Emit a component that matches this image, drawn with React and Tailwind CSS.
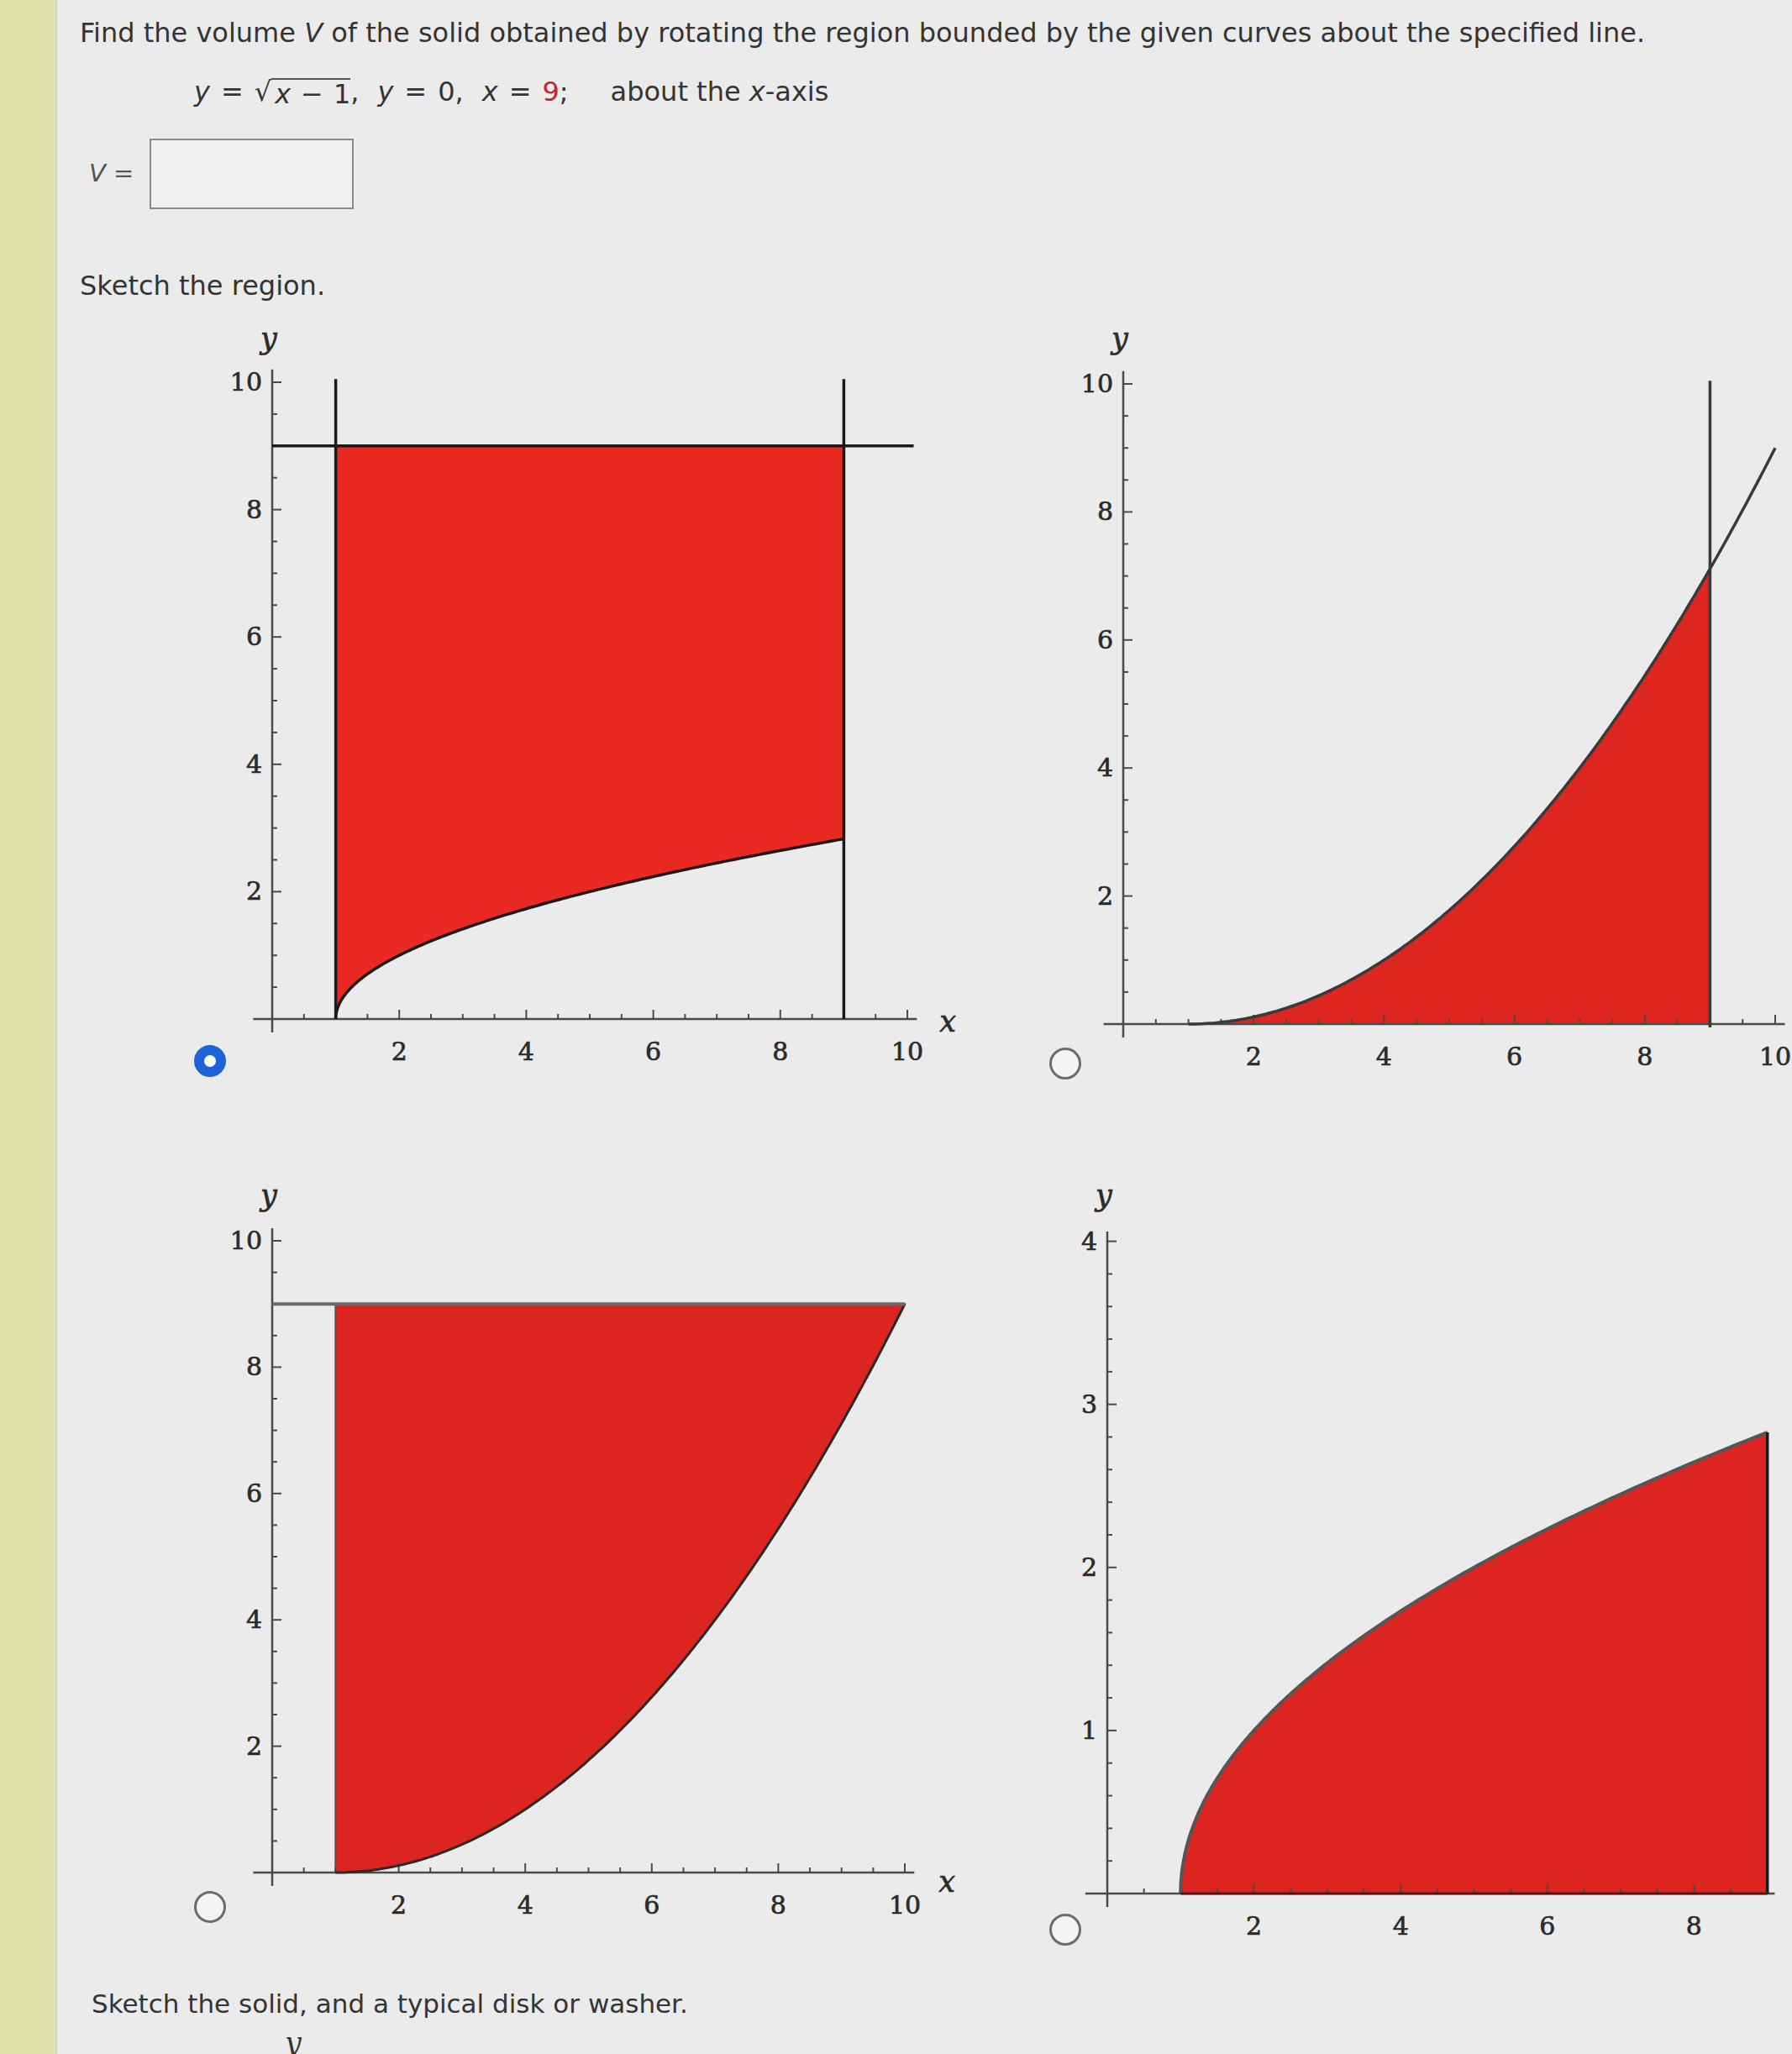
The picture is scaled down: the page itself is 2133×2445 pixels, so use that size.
import React from 'react'

const SANS = '"DejaVu Sans", Verdana, sans-serif'
const SERIF = '"DejaVu Serif", "Liberation Serif", serif'

// sample a curve; sq packs points near a (for the sqrt corner)
const pts = (f, a, b, n = 160, sq = false) =>
  Array.from({ length: n + 1 }, (_, i) => {
    const t = i / n
    const x = a + (b - a) * (sq ? t * t : t)
    return [x, f(x)]
  })

const sqrtF = x => Math.sqrt(Math.max(0, x - 1))
const quadF = x => ((x - 1) * (x - 1)) / 9

function Plot({ w, h, ox, oy, sx, sy, xEnd, yEnd, xStep = 0.5, yStep = 0.5, xLabels, yLabels, xName, under, over }) {
  const X = x => ox + x * sx
  const Y = y => oy - y * sy
  const line = arr => arr.map(([x, y], i) => `${i ? 'L' : 'M'}${X(x).toFixed(1)},${Y(y).toFixed(1)}`).join(' ')

  const xt = []
  for (let v = xStep; v <= xEnd - 0.05; v += xStep) xt.push(+v.toFixed(2))
  const yt = []
  for (let v = yStep; v <= yEnd + 0.001; v += yStep) yt.push(+v.toFixed(2))

  return (
    <svg width={w} height={h} className="block shrink-0" style={{ fontFamily: SERIF }}>
      {under && under({ X, Y, line })}

      {/* axes */}
      <line x1={X(-0.3)} y1={Y(0)} x2={X(xEnd)} y2={Y(0)} stroke="#4a4a4a" strokeWidth="2.5" />
      <line x1={X(0)} y1={Y(0) + 16} x2={X(0)} y2={Y(yEnd)} stroke="#4a4a4a" strokeWidth="2.5" />
      {xt.map(v => {
        const major = xLabels.includes(v)
        return <line key={'x' + v} x1={X(v)} y1={Y(0)} x2={X(v)} y2={Y(0) - (major ? 11 : 6)} stroke="#4a4a4a" strokeWidth="2" />
      })}
      {yt.map(v => {
        const major = yLabels.includes(v)
        return <line key={'y' + v} x1={X(0)} y1={Y(v)} x2={X(0) + (major ? 11 : 6)} y2={Y(v)} stroke="#4a4a4a" strokeWidth="2" />
      })}

      {over && over({ X, Y, line })}

      {/* labels */}
      <g fill="#2b2b2b" stroke="#2b2b2b" strokeWidth="0.7">
        {xLabels.map(v => (
          <text key={'xl' + v} x={X(v)} y={Y(0) + 49} textAnchor="middle" fontSize="30">{v}</text>
        ))}
        {yLabels.map(v => (
          <text key={'yl' + v} x={X(0) - 12} y={Y(v) + 10} textAnchor="end" fontSize="30">{v}</text>
        ))}
        <text x={X(0) - 4} y={40} textAnchor="middle" fontSize="35" fontStyle="italic">y</text>
        {xName && (
          <text x={xName[0]} y={xName[1]} textAnchor="middle" fontSize="35" fontStyle="italic">x</text>
        )}
      </g>
    </svg>
  )
}

function Radio({ checked, mb }) {
  return (
    <div
      className={`w-[38px] h-[38px] shrink-0 self-end rounded-full ${
        checked ? 'border-[12px] border-[#1f63d8] bg-white' : 'border-[3px] border-[#6c6c6c] bg-[#f4f4f4]'
      } ${mb}`}
    />
  )
}

export default function App() {
  return (
    <div className="flex w-[2133px] h-[2445px] overflow-hidden bg-[#ebebeb]" style={{ fontFamily: SANS }}>
      {/* left gutter */}
      <div className="w-[68px] shrink-0 bg-[#dfe2ab] border-r-2 border-[#d2d4c0]" />

      <div className="flex-1 min-w-0 pl-[27px] pt-[19px] text-[#343434]">
        <p className="text-[32px] leading-[40px] whitespace-nowrap">
          Find the volume <i>V</i> of the solid obtained by rotating the region bounded by the given curves about the specified line.
        </p>

        {/* curves */}
        <div className="mt-[30px] ml-[136px] flex items-end text-[32px] leading-[40px] whitespace-nowrap">
          <i>y</i>
          <span className="mx-[13px]">=</span>
          <span>√</span>
          <span className="border-t-2 border-[#555] leading-[34px] pl-[4px]">
            <i>x</i>
            <span className="mx-[12px]">−</span>1
          </span>
          <span>,</span>
          <i className="ml-[22px]">y</i>
          <span className="mx-[13px]">=</span>
          <span>0,</span>
          <i className="ml-[22px]">x</i>
          <span className="mx-[13px]">=</span>
          <span className="text-[#c3262c]">9</span>
          <span>;</span>
          <span className="ml-[50px]">about the <i>x</i>-axis</span>
        </div>

        {/* answer */}
        <div className="mt-[36px] flex items-center">
          <span className="w-[83px] pl-[11px] text-[29px] text-[#555]"><i>V</i> =</span>
          <div className="w-[243px] h-[84px] border-2 border-[#8a8a8a] bg-[#f0f0f0]" />
        </div>

        <p className="mt-[71px] text-[32px] leading-[40px]">Sketch the region.</p>

        {/* row 1 */}
        <div className="mt-[15px] flex">
          <div className="ml-[136px] flex">
            <Radio checked mb="mb-[8px]" />
            <Plot
              w={980} h={915} ox={55} oy={838} sx={75.6} sy={75.8}
              xEnd={10.15} yEnd={10.2}
              xLabels={[2, 4, 6, 8, 10]} yLabels={[2, 4, 6, 8, 10]}
              xName={[859, 853]}
              under={({ X, Y, line }) => (
                <path
                  d={`M${X(1)},${Y(9)} L${X(9)},${Y(9)} ` + line(pts(sqrtF, 1, 9, 160, true).reverse()).replace('M', 'L') + ' Z'}
                  fill="#ea2a22"
                />
              )}
              over={({ X, Y, line }) => (
                <g stroke="#1a1a1a" strokeWidth="3.5" fill="none">
                  <path d={line(pts(sqrtF, 1, 9, 160, true))} />
                  <line x1={X(1)} y1={Y(0)} x2={X(1)} y2={Y(10.05)} />
                  <line x1={X(9)} y1={Y(0)} x2={X(9)} y2={Y(10.05)} />
                  <line x1={X(0)} y1={Y(9)} x2={X(10.1)} y2={Y(9)} />
                </g>
              )}
            />
          </div>
          <div className="flex">
            <Radio mb="mb-[5px]" />
            <Plot
              w={880} h={915} ox={50} oy={844} sx={77.6} sy={76.2}
              xEnd={10.15} yEnd={10.2}
              xLabels={[2, 4, 6, 8, 10]} yLabels={[2, 4, 6, 8, 10]}
              under={({ X, Y, line }) => (
                <path d={line(pts(quadF, 1, 9)) + ` L${X(9)},${Y(0)} Z`} fill="#de2620" stroke="#7a1512" strokeWidth="2" />
              )}
              over={({ X, Y, line }) => (
                <g stroke="#3a3a3a" strokeWidth="3.5" fill="none">
                  <path d={line(pts(quadF, 1, 10))} />
                  <line x1={X(9)} y1={Y(0) + 4} x2={X(9)} y2={Y(10.05)} />
                </g>
              )}
            />
          </div>
        </div>

        {/* row 2 */}
        <div className="mt-[105px] flex">
          <div className="ml-[136px] flex">
            <Radio mb="mb-[41px]" />
            <Plot
              w={980} h={935} ox={55} oy={834} sx={75.3} sy={75.2}
              xEnd={10.15} yEnd={10.2}
              xLabels={[2, 4, 6, 8, 10]} yLabels={[2, 4, 6, 8, 10]}
              xName={[858, 857]}
              under={({ X, Y, line }) => (
                <path
                  d={`M${X(1)},${Y(9)} L${X(1)},${Y(0)} ` + line(pts(quadF, 1, 10)).replace('M', 'L') + ' Z'}
                  fill="#dc2420"
                  stroke="#555"
                  strokeWidth="2"
                />
              )}
              over={({ X, Y, line }) => (
                <g fill="none">
                  <path d={line(pts(quadF, 1, 10))} stroke="#2a2a2a" strokeWidth="3" />
                  <line x1={X(0)} y1={Y(9)} x2={X(10)} y2={Y(9)} stroke="#6a6a6a" strokeWidth="4" />
                </g>
              )}
            />
          </div>
          <div className="flex">
            <Radio mb="mb-[14px]" />
            <Plot
              w={880} h={935} ox={31} oy={859} sx={87.3} sy={194.1}
              xEnd={9.1} yEnd={4.06} yStep={0.2}
              xLabels={[2, 4, 6, 8]} yLabels={[1, 2, 3, 4]}
              under={({ X, Y, line }) => (
                <path d={line(pts(sqrtF, 1, 9, 160, true)) + ` L${X(9)},${Y(0)} Z`} fill="#dc2420" />
              )}
              over={({ X, Y, line }) => (
                <g fill="none">
                  <path d={line(pts(sqrtF, 1, 9, 160, true))} stroke="#555" strokeWidth="4" />
                  <line x1={X(9)} y1={Y(0)} x2={X(9)} y2={Y(Math.sqrt(8))} stroke="#1a1a1a" strokeWidth="3.5" />
                  <line x1={X(1)} y1={Y(0)} x2={X(9)} y2={Y(0)} stroke="#5a1210" strokeWidth="3" />
                </g>
              )}
            />
          </div>
        </div>

        <p className="mt-[35px] ml-[14px] text-[31px] leading-[40px]">Sketch the solid, and a typical disk or washer.</p>
        <div className="mt-[10px] ml-[244px] text-[35px] leading-[35px] italic text-[#333]" style={{ fontFamily: SERIF }}>y</div>
      </div>
    </div>
  )
}
